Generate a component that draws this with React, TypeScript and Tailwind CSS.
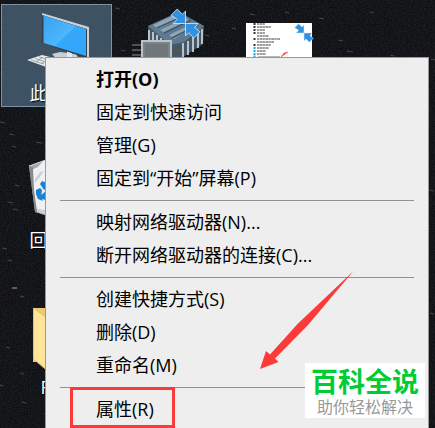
import React from "react";

const groups: { text: string; bold?: boolean; marked?: boolean }[][] = [
  [
    { text: "打开(O)", bold: true },
    { text: "固定到快速访问" },
    { text: "管理(G)" },
    { text: "固定到“开始”屏幕(P)" },
  ],
  [{ text: "映射网络驱动器(N)..." }, { text: "断开网络驱动器的连接(C)..." }],
  [{ text: "创建快捷方式(S)" }, { text: "删除(D)" }, { text: "重命名(M)" }],
  [{ text: "属性(R)", marked: true }],
];

const streaks = [
  [115, 8, 5], [121, 50, 4], [0, 122, 5], [9, 134, 5], [12, 146, 4], [36, 142, 6], [8, 202, 5],
  [13, 209, 5], [2, 248, 5], [20, 296, 4], [20, 373, 4], [0, 385, 3], [6, 347, 4], [8, 260, 4],
  [250, 14, 5], [285, 12, 4], [319, 18, 5], [347, 51, 6], [390, 55, 4], [431, 59, 4], [430, 313, 4],
  [232, 28, 4], [338, 40, 5], [370, 12, 4], [205, 35, 4], [430, 190, 4], [15, 185, 4], [22, 402, 4],
];

/* Dark, grainy wallpaper */
function Wallpaper() {
  return (
    <svg className="absolute inset-0 h-full w-full" aria-hidden="true">
      <filter id="grain" x="0" y="0" width="100%" height="100%" colorInterpolationFilters="sRGB">
        <feTurbulence type="fractalNoise" baseFrequency="0.7" numOctaves="2" seed="4" />
        <feColorMatrix values="0.13 0 0 0 0.014  0.13 0 0 0 0.02  0.13 0 0 0 0.032  0 0 0 0 1" />
      </filter>
      <rect width="100%" height="100%" filter="url(#grain)" />
      {streaks.map(([x, y, w], i) => (
        <path key={i} d={`M${x} ${y}l${w} 1`} stroke="#59616a" strokeWidth="1.2" opacity="0.65" />
      ))}
      <path d="M12 288h5" stroke="#a08478" strokeWidth="1.5" opacity="0.8" />
    </svg>
  );
}

function ComputerIcon() {
  return (
    <svg width="64" height="69" viewBox="24 12 64 69" aria-hidden="true">
      <defs>
        <linearGradient id="screen" x1="0" y1="0" x2="1" y2="1">
          <stop offset="0" stopColor="#35a3f4" />
          <stop offset="0.5" stopColor="#4db6fc" />
          <stop offset="0.52" stopColor="#36a8fb" />
          <stop offset="1" stopColor="#2fa5fc" />
        </linearGradient>
      </defs>
      <path d="M51 54l8-2 16 2 5 8H58z" fill="#c9d0d5" />
      <path d="M66 50l5 2v6h-5z" fill="#e5e8ea" />
      <path d="M41 13l46 14v32l-2-1-44-15z" fill="#343f48" />
      <path d="M41 13l47 14v31l-2-1V29L41 15z" fill="#ccd1d4" />
      <path d="M42.500 15.500L85 29v27L42.500 43z" fill="url(#screen)" />
      <path d="M26 60l15-5 12 3v11l-8-2z" fill="#e9eced" />
      <path d="M30 60l13 4M34 58.500l13 4M38 57l11 3M35 62l7-5M40 64l7-5" stroke="#87929a" strokeWidth="0.8" />
    </svg>
  );
}

function BinIcon() {
  return (
    <svg width="64" height="69" viewBox="24 158 64 69" aria-hidden="true">
      <path d="M28 165l16-6 34 6-6 47-22 4-16-5z" fill="#a5a9ab" />
      <path d="M28 165l5 2 5 45-4-1z" fill="#858a8d" />
      <path d="M32 168l5-2 5-6 6-2v57l-12-5-3-21z" fill="#eef0f1" />
      <path d="M34 178l5-7 4-1-5 7-4 5zM36 208l9 1v5l-9-3z" fill="#cbd0d4" />
      <path d="M28 165l17-6" stroke="#d4d7d8" strokeWidth="1" />
      <path d="M39 183l2-3 5 2v5l-3 2zM35 189l4-2 2 2-1 8 2 3-5-2-2-5zM39 195l6-5v9l-5-1z" fill="#1683d8" />
    </svg>
  );
}

function FolderIcon() {
  return (
    <svg width="64" height="69" viewBox="24 306 64 69" aria-hidden="true">
      <path d="M32 308h46v54H32z" fill="#f0ca6f" />
      <path d="M32.500 308L50 321v53l-17.500-15z" fill="#ffe49a" stroke="#d9b65f" strokeWidth="0.800" />
    </svg>
  );
}

function BlueArrows({ size }: { size: number }) {
  return (
    <svg className="absolute right-0 top-0 translate-x-0.5" width={size} height={size} viewBox="0 0 30 30" aria-hidden="true">
      <path d="M1 7l6-6 5 5 3-3v12H3l4-4z" fill="#2f91df" stroke="#d7ebf8" strokeWidth="0.8" />
      <path d="M15 15h12l-3 4 5 4-6 6-5-5-3 3z" fill="#2f91df" stroke="#d7ebf8" strokeWidth="0.8" />
    </svg>
  );
}

function ArchiveIcon() {
  return (
    <div className="relative">
      <svg width="68" height="60" viewBox="131 8 68 60" overflow="visible" aria-hidden="true">
        <path d="M148 26l31-14 25 14-1 18-20 13h-28l-7-15z" fill="#465865" />
        <path d="M148 26l31-14 25 14-20 16-14 3z" fill="#5f7a90" />
        <path d="M153 25l25-12 6 4-26 12zM160 30l26-12 4 3-25 12zM169 35l25-12 4 2-24 14z" fill="#8fa6b8" />
        <path d="M157 28l27-12M164 33l27-13M172 38l26-13" stroke="#415768" strokeWidth="1.5" />
        <path d="M149 30v13M153 32v11M157 35v8M161 38v5M165 40v3M183 43v15M188 41v14M193 37v15M198 33v15M202 29v15" stroke="#b4c3cc" strokeWidth="2" />
        <path d="M132 45h13M132 50h13M132 55h13M173 48h9M173 53h9" stroke="#4e5350" strokeWidth="2" />
        <rect x="142" y="41" width="29" height="27" fill="#7c8386" stroke="#bac3c6" strokeWidth="2" />
        <rect x="145" y="44" width="23" height="22" fill="#70777a" />
      </svg>
      <BlueArrows size={31} />
    </div>
  );
}

function DocumentIcon() {
  return (
    <div className="relative">
      <svg width="66" height="60" viewBox="0 0 66 60" aria-hidden="true">
        <path d="M0 0h66v60H0z" fill="#fff" />
        <path
          d="M11 1h8M11 4h14M11 7h8M11 10h8M11 13h12M11 16h23M11 19h17M11 22h14M11 25h12M11 28h9M11 31h9"
          stroke="#7d7d7d"
          strokeWidth="1.4"
          strokeDasharray="2 0.500 3 0.400"
        />
        <path d="M7.500 1h2M7.500 4h2M7.500 7h2M7.500 10h2M7.500 16h2M7.500 22h2" stroke="#333" strokeWidth="2" />
        <path d="M7.500 25h2M7.500 28h2M7.500 31h2M7.500 33.500h2" stroke="#24a2dd" strokeWidth="2" />
        <path d="M42 29l-7 5 3-4z" fill="#ef4a48" stroke="#ef4a48" strokeWidth="0.500" />
        <path d="M12 33.500h22" stroke="#999" strokeWidth="0.700" />
      </svg>
      <BlueArrows size={20} />
    </div>
  );
}

function Shortcut({ label, selected, children }: { label: string; selected?: boolean; children: React.ReactNode }) {
  return (
    <li
      className={`flex h-[103px] w-[111px] flex-col items-center justify-end border ${
        selected ? "border-[#7d93a3] bg-[#506c83]/70" : "border-transparent"
      }`}
    >
      {children}
      <span className="min-w-8 pb-px text-[18px] leading-6 text-white [text-shadow:1px_1px_1px_#000]">{label}</span>
    </li>
  );
}

export default function App() {
  return (
    <main className="relative h-screen w-full overflow-hidden bg-[#14161a] font-['Open_Sans','Noto_Sans_CJK_SC',sans-serif]">
      <Wallpaper />

      <div className="relative flex items-start">
        <ul className="flex flex-col gap-11 pl-px pt-1">
          <Shortcut label="此电脑" selected>
            <ComputerIcon />
          </Shortcut>
          <Shortcut label="回收站">
            <BinIcon />
          </Shortcut>
          <Shortcut label="F">
            <FolderIcon />
          </Shortcut>
        </ul>
        <div className="pl-[19px] pt-2">
          <ArchiveIcon />
        </div>
        <div className="pl-[47px] pt-[23px]">
          <DocumentIcon />
        </div>
      </div>

      {/* Context menu */}
      <div
        role="menu"
        className="absolute left-[45px] right-[6px] top-[57px] border border-[#999] bg-[#eee] py-[5px] text-[18px] text-black"
      >
        {groups.map((items, g) => (
          <React.Fragment key={g}>
            {g > 0 && <hr className="mx-[14px] my-[5px] border-t border-[#919191]" />}
            {items.map((item) => (
              <button
                key={item.text}
                type="button"
                role="menuitem"
                className={`relative flex h-[33px] w-full items-center whitespace-nowrap pl-[50px] text-left ${item.bold ? "font-bold" : "font-normal"}`}
              >
                {item.text}
                {item.marked && (
                  <span className="absolute -top-[6px] left-6 h-[41px] w-[105px] border-3 border-[#fb3b3a]" />
                )}
              </button>
            ))}
          </React.Fragment>
        ))}
      </div>

      {/* Red pointer over the menu */}
      <svg className="absolute inset-0 h-full w-full" aria-hidden="true">
        <path d="M260 369l6-18 4 3.500 28-31L353.500 271 308 325l-33 33.500 3.500 3.500z" fill="#fb3b3a" />
      </svg>

      {/* Site badge */}
      <div className="absolute bottom-[10px] right-[10px] flex flex-col items-center bg-white px-[6px] pt-[5px] font-['Liberation_Sans','Noto_Sans_CJK_SC',sans-serif]">
        <span className="text-[27px] font-bold leading-[30px] text-[#0c3]">百科全说</span>
        <span className="text-[16px] leading-5 text-[#999]">助你轻松解决</span>
      </div>
    </main>
  );
}
